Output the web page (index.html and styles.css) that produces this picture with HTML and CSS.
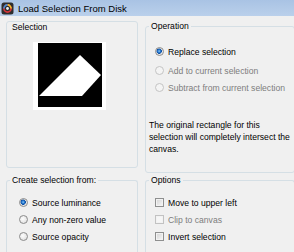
FILE: index.html
```html
<!DOCTYPE html>
<html lang="en">
<head>
    <meta charset="UTF-8">
    <title>Load Selection From Disk</title>
    <link rel="stylesheet" href="styles.css">
</head>
<body>
    <div class="titlebar">
        <svg class="app-icon" width="13" height="13" viewBox="0 0 13 13">
            <rect x="0.5" y="0.5" width="12" height="12" rx="2.5" fill="#2e2e2e"/>
            <circle cx="6.5" cy="6.5" r="3.6" fill="none" stroke="#d8353a" stroke-width="1.6"/>
            <path d="M6.5 2.9 A3.6 3.6 0 0 1 10.1 6.5" fill="none" stroke="#f2c12e" stroke-width="1.6"/>
            <path d="M2.9 6.5 A3.6 3.6 0 0 1 6.5 2.9" fill="none" stroke="#3b8fd9" stroke-width="1.6"/>
            <circle cx="6.5" cy="6.5" r="1.4" fill="#e8eef4"/>
        </svg>
        <span class="title">Load Selection From Disk</span>
    </div>
    <div class="dialog">
        <div class="panel">
            <div class="panel-label">Selection</div>
            <div class="preview">
                <svg width="64" height="64" viewBox="0 0 64 64">
                    <rect width="64" height="64" fill="#000"/>
                    <polygon points="42,12 63,32 44,53 1,53" fill="#fff"/>
                </svg>
            </div>
        </div>
        <fieldset class="group operation">
            <legend>Operation</legend>
            <div class="opt first"><span class="radio checked"></span>Replace selection</div>
            <div class="opt disabled"><span class="radio"></span>Add to current selection</div>
            <div class="opt disabled"><span class="radio"></span>Subtract from current selection</div>
            <p class="note">The original rectangle for this<br>selection will completely intersect the<br>canvas.</p>
        </fieldset>
        <fieldset class="group create">
            <legend>Create selection from:</legend>
            <div class="opt"><span class="radio checked"></span>Source luminance</div>
            <div class="opt"><span class="radio"></span>Any non-zero value</div>
            <div class="opt"><span class="radio"></span>Source opacity</div>
        </fieldset>
        <fieldset class="group options">
            <legend>Options</legend>
            <div class="opt"><span class="check"></span>Move to upper left</div>
            <div class="opt disabled"><span class="check"></span>Clip to canvas</div>
            <div class="opt"><span class="check"></span>Invert selection</div>
        </fieldset>
    </div>
</body>
</html>
```

FILE: styles.css
```css
body {
    margin: 0;
    width: 294px;
    height: 252px;
    overflow: hidden;
    background-color: #f0f0f0;
    color: #000;
    font-family: "Liberation Sans", Arial, sans-serif;
    font-size: 8.6px;
}
.titlebar {
    height: 16px;
    display: flex;
    align-items: center;
    gap: 4px;
    padding-left: 1px;
    background: linear-gradient(#a9c3e4, #bad0eb);
    font-size: 9.5px;
}
.app-icon {
    flex: none;
}
.dialog {
    display: grid;
    grid-template-columns: 132px 150px;
    column-gap: 7px;
    row-gap: 2px;
    padding: 5px 0 0 6px;
    align-items: start;
}
.panel {
    height: 147px;
    box-sizing: border-box;
    border: 1px solid #d5dfe5;
    border-radius: 3px;
}
.panel-label {
    line-height: 10px;
    padding-left: 5px;
}
.preview {
    width: 64px;
    height: 64px;
    padding: 1px 4px 3px 5px;
    margin: 10px 0 0 26px;
    background-color: #fff;
}
.preview svg {
    display: block;
}
.group {
    margin: 0;
    padding: 0;
    min-width: 0;
    box-sizing: border-box;
    border: 1px solid #d5dfe5;
    border-radius: 3px;
}
.group legend {
    margin-left: 3px;
    padding: 0 2px;
    line-height: 10px;
}
.operation {
    height: 152px;
    padding-top: 12px;
}
.create, .options {
    height: 77px;
    padding-top: 8px;
    border-bottom: none;
    border-radius: 3px 3px 0 0;
}
.create legend, .options legend {
    line-height: 11px;
}
.opt {
    display: flex;
    align-items: center;
    gap: 4px;
    height: 17px;
    padding-left: 9px;
    white-space: nowrap;
}
.create .opt {
    padding-left: 12px;
}
.opt.first {
    margin-bottom: 2px;
}
.opt.disabled {
    color: #7d7d7d;
}
.note {
    margin: 23px 0 0 3px;
    line-height: 12px;
    white-space: nowrap;
}
.radio {
    flex: none;
    width: 9px;
    height: 9px;
    box-sizing: border-box;
    border: 1px solid #8b8b8b;
    border-radius: 50%;
    background: radial-gradient(circle at 40% 40%, #fdfdfd, #d9d9d9);
}
.radio.checked {
    background: radial-gradient(circle at 45% 45%, #9ad3f6 0, #2c7fd6 1.2px, #0d4fa3 2.4px, #e4e4e4 2.9px, #f6f6f6 4.5px);
}
.disabled .radio {
    border-color: #c4c4c4;
    background: #f4f4f4;
}
.check {
    flex: none;
    width: 9px;
    height: 9px;
    box-sizing: border-box;
    border: 1px solid #8e8f8f;
    background: linear-gradient(135deg, #d2d2d2, #f8f8f8);
    box-shadow: inset 0 0 0 1px #f2f2f2;
}
.disabled .check {
    border-color: #c2c2c2;
    background: #f6f6f6;
}
```
